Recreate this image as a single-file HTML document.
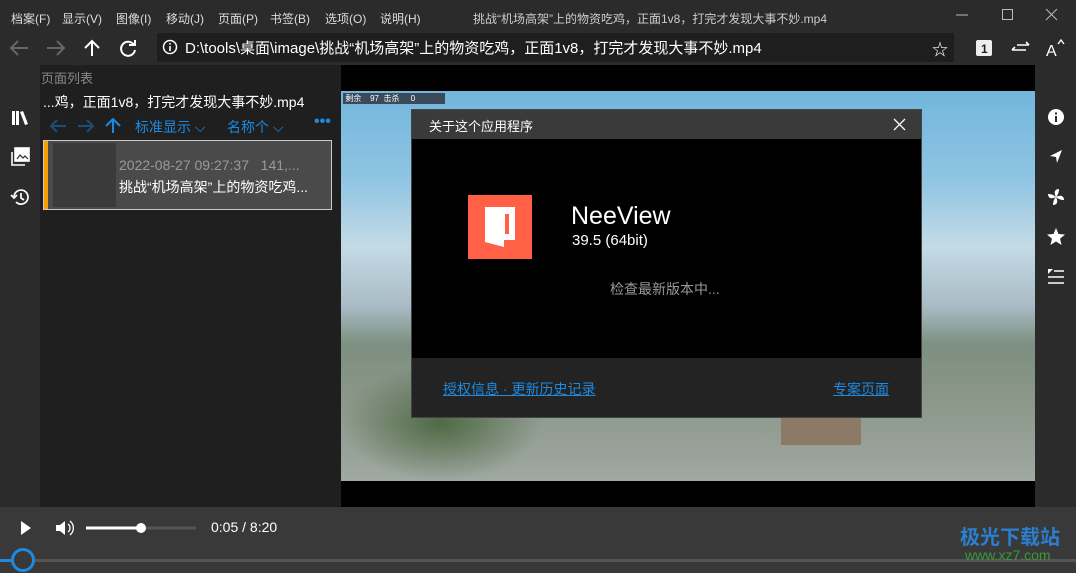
<!DOCTYPE html>
<html><head><meta charset="utf-8"><style>
*{margin:0;padding:0;box-sizing:border-box}
body{width:1076px;height:573px;overflow:hidden;background:#2b2b2b;font-family:"Liberation Sans","Noto Sans CJK SC",sans-serif;position:relative;color:#fff}
.a{position:absolute}
.menu{top:0;left:0;width:1076px;height:33px;background:#2b2b2b;font-size:12px;color:#ddd}
.menu span{position:absolute;top:10px}
.tb{top:33px;left:0;width:1076px;height:32px;background:#2b2b2b}
.addr{left:157px;top:33px;width:797px;height:29px;background:#1e1e1e;font-size:15px;color:#fff}
.lstrip{left:0;top:65px;width:40px;height:442px;background:#2b2b2b}
.panel{left:40px;top:65px;width:301px;height:442px;background:#1f1f1f}
.view{left:341px;top:65px;width:694px;height:442px;background:#000;overflow:hidden}
.rstrip{left:1035px;top:65px;width:41px;height:442px;background:#2b2b2b}
.bottom{left:0;top:507px;width:1076px;height:66px;background:#393939}
</style></head><body>
<div class="a menu">
<span style="left:11px">档案(F)</span><span style="left:62px">显示(V)</span><span style="left:116px">图像(I)</span><span style="left:166px">移动(J)</span><span style="left:218px">页面(P)</span><span style="left:270px">书签(B)</span><span style="left:325px">选项(O)</span><span style="left:380px">说明(H)</span>
<span style="left:473px;color:#ccc">挑战“机场高架”上的物资吃鸡，正面1v8，打完才发现大事不妙.mp4</span>
<svg class="a" style="left:950px;top:8px" width="120" height="14"><line x1="6" y1="7" x2="18" y2="7" stroke="#bbb"/><rect x="52.5" y="1.5" width="10" height="10" fill="none" stroke="#bbb"/><path d="M96 1l11 11M107 1l-11 11" stroke="#bbb"/></svg>
</div>
<div class="a tb">
<svg class="a" style="left:0;top:5px" width="150" height="20" fill="none" stroke-width="2"><path d="M28 10H12M18 3l-7 7 7 7" stroke="#666"/><path d="M47 10h16M57 3l7 7-7 7" stroke="#666"/><path d="M92 18V3M85 10l7-7 7 7" stroke="#fff"/><path d="M134 7a7 7 0 1 0 1 5" stroke="#fff"/><path d="M129 5h6V0" stroke="#fff" transform="translate(0,2)"/></svg>
<svg class="a" style="left:974px;top:5px" width="100" height="20"><rect x="2" y="2" width="16" height="16" rx="2" fill="#eee"/><text x="7" y="15" font-size="12" font-weight="bold" fill="#222" font-family="Liberation Sans">1</text><path d="M38 12h14M38 12l3-3M55 7h-12M55 7l-3-3" stroke="#fff" stroke-width="1.6" fill="none"/><text x="72" y="18" font-size="16" fill="#fff" font-family="Liberation Sans">A</text><path d="M84 6l3-4 3 4" stroke="#fff" fill="none" stroke-width="1.4"/></svg>
</div>
<div class="a addr">
<svg class="a" style="left:5px;top:6px" width="16" height="16"><circle cx="8" cy="8" r="6.5" fill="none" stroke="#fff" stroke-width="1.5"/><rect x="7.2" y="7" width="1.6" height="5" fill="#fff"/><rect x="7.2" y="4" width="1.6" height="1.6" fill="#fff"/></svg>
<span class="a" style="left:28px;top:4px">D:\tools\桌面\image\挑战“机场高架”上的物资吃鸡，正面1v8，打完才发现大事不妙.mp4</span>
<span class="a" style="left:775px;top:3px;font-size:16px">☆</span>
</div>
<div class="a lstrip">
<svg class="a" style="left:10px;top:43px" width="20" height="20" fill="#fff"><rect x="2" y="3" width="3" height="14"/><rect x="6" y="3" width="3" height="14"/><path d="M10 4l3-1 5 13-3 1z"/></svg>
<svg class="a" style="left:10px;top:82px" width="20" height="20" fill="none" stroke="#fff" stroke-width="1.6"><rect x="5" y="1" width="14" height="13" fill="#fff"/><path d="M2 5v13h13"/><path d="M7 12l3-4 3 3 2-2 3 3" stroke="#2b2b2b" stroke-width="1.2"/></svg>
<svg class="a" style="left:10px;top:122px" width="20" height="20" fill="none" stroke="#fff" stroke-width="1.7"><path d="M4 10a7 7 0 1 1 2 5"/><path d="M1 8l3 3 3-3"/><path d="M11 6v5l3 2"/></svg>
</div>
<div class="a panel">
<div class="a" style="left:1px;top:3px;font-size:13px;color:#888">页面列表</div>
<div class="a" style="left:3px;top:27px;font-size:14px;color:#fff">...鸡，正面1v8，打完才发现大事不妙.mp4</div>
<svg class="a" style="left:8px;top:51px" width="80" height="20" fill="none" stroke-width="2"><path d="M18 10H3M9 4l-6 6 6 6" stroke="#1e4e78"/><path d="M30 10h15M39 4l6 6-6 6" stroke="#1e4e78"/><path d="M65 17V3M58 10l7-7 7 7" stroke="#1d8ae0"/></svg>
<div class="a" style="left:95px;top:52px;font-size:14px;color:#1d8ae0">标准显示 ⌵</div>
<div class="a" style="left:187px;top:52px;font-size:14px;color:#1d8ae0">名称个 ⌵</div>
<div class="a" style="left:274px;top:48px;font-size:16px;color:#1d8ae0;font-weight:bold">•••</div>
<div class="a" style="left:3px;top:75px;width:289px;height:70px;background:#4a4a4a;border:1px solid #ccc">
<div class="a" style="left:0;top:0;width:4px;height:68px;background:#f5a000"></div>
<div class="a" style="left:9px;top:2px;width:63px;height:64px;background:#3a3a3a"></div>
<div class="a" style="left:75px;top:16px;font-size:14px;color:#999">2022-08-27 09:27:37&nbsp;&nbsp;&nbsp;141,...</div>
<div class="a" style="left:75px;top:36px;font-size:14px;color:#fff">挑战“机场高架”上的物资吃鸡...</div>
</div>
</div>
<div class="a view">
<div class="a" style="left:0;top:26px;width:694px;height:390px;background:linear-gradient(180deg,#72b6dc 0%,#8ec4e2 22%,#c4dae6 40%,#a9bcc6 55%,#7c8f80 65%,#8a9688 78%,#a0a8a2 100%)"></div>
<div class="a" style="left:0;top:300px;width:200px;height:116px;background:radial-gradient(ellipse closest-side,#4f6a45,rgba(79,106,69,0))"></div>
<div class="a" style="left:440px;top:340px;width:80px;height:40px;background:#8d7a66"></div>
<div class="a" style="left:2px;top:28px;width:102px;height:11px;background:#3a4a5a;font-size:8px;color:#fff;line-height:11px">&nbsp;剩余 &nbsp;&nbsp;&nbsp;97 &nbsp;击杀 &nbsp;&nbsp;&nbsp;&nbsp;0</div>
</div>
<div class="a" style="left:411px;top:109px;width:511px;height:309px;background:#000;border:1px solid #444">
<div class="a" style="left:0;top:0;width:509px;height:29px;background:#3a3a3a"></div>
<div class="a" style="left:17px;top:6px;font-size:13px;color:#fff">关于这个应用程序</div>
<svg class="a" style="left:481px;top:8px" width="13" height="13"><path d="M1 1l11 11M12 1L1 12" stroke="#fff" stroke-width="1.3"/></svg>
<div class="a" style="left:56px;top:85px;width:64px;height:64px;background:#ff6046"></div>
<svg class="a" style="left:56px;top:85px" width="64" height="64"><path d="M17 12h30v33H36v7l-19-5z" fill="#fff"/><rect x="37" y="19" width="4" height="20" fill="#ff6046"/></svg>
<div class="a" style="left:159px;top:92px;font-size:25px;color:#fff">NeeView</div>
<div class="a" style="left:160px;top:122px;font-size:15px;color:#fff">39.5 (64bit)</div>
<div class="a" style="left:198px;top:169px;font-size:14px;color:#999">检查最新版本中...</div>
<div class="a" style="left:0;top:248px;width:509px;height:59px;background:#232323"></div>
<div class="a" style="left:31px;top:269px;font-size:14px;color:#1d8ae0;text-decoration:underline">授权信息 · 更新历史记录</div>
<div class="a" style="left:421px;top:269px;font-size:14px;color:#1d8ae0;text-decoration:underline">专案页面</div>
</div>
<div class="a rstrip">
<svg class="a" style="left:10px;top:42px" width="22" height="190" fill="#fff"><circle cx="11" cy="10" r="8"/><rect x="10" y="9" width="2" height="6" fill="#2b2b2b"/><rect x="10" y="5.5" width="2" height="2" fill="#2b2b2b"/><path d="M17 43L5 49l6 1 1 6z"/><path d="M11 90c-3-6 0-8 3-8 0 3-1 6-3 8zM11 90c6-3 8 0 8 3-3 0-6-1-8-3zM11 90c3 6 0 8-3 8 0-3 1-6 3-8zM11 90c-6 3-8 0-8-3 3 0 6 1 8 3z"/><path d="M11 121l2.5 6 6.5.5-5 4.2 1.6 6.3-5.6-3.5-5.6 3.5 1.6-6.3-5-4.2 6.5-.5z"/><path d="M3 170h16M3 176h16M9 164h10" stroke="#fff" stroke-width="1.5"/><path d="M3 162h5l-5 5z"/></svg>
</div>
<div class="a bottom">
<svg class="a" style="left:18px;top:12px" width="200" height="18"><path d="M3 2l10 7-10 7z" fill="#fff"/><path d="M38 6h4l5-4v14l-5-4h-4z" fill="#fff"/><path d="M50 5a5 5 0 0 1 0 8M52 2a9 9 0 0 1 0 14" stroke="#fff" fill="none" stroke-width="1.3"/><line x1="68" y1="9" x2="123" y2="9" stroke="#fff" stroke-width="3"/><line x1="123" y1="9" x2="178" y2="9" stroke="#555" stroke-width="3"/><circle cx="123" cy="9" r="5" fill="#fff"/></svg>
<div class="a" style="left:211px;top:12px;font-size:14px;color:#fff">0:05 / 8:20</div>
<div class="a" style="left:0;top:52px;width:1076px;height:3px;background:#555"></div>
<div class="a" style="left:11px;top:41px;width:24px;height:24px;border:3px solid #1d8ae0;border-radius:50%;background:#393939"></div>
<div class="a" style="left:0;top:52px;width:11px;height:3px;background:#1d8ae0"></div>
<div class="a" style="left:960px;top:14px;font-size:20px;color:#2c7fd0;font-weight:bold">极光下载站</div>
<div class="a" style="left:965px;top:40px;font-size:14px;color:#3a9a3a">www.xz7.com</div>
</div>
</body></html>
